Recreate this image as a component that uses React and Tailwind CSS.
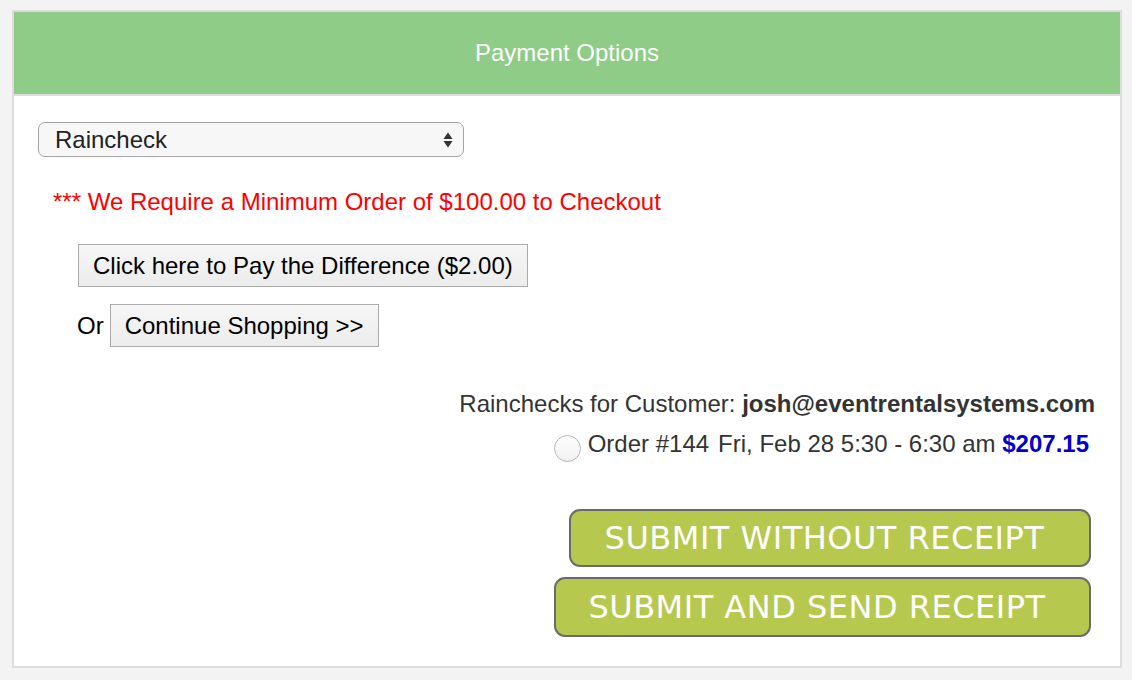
export default function App() {
  return (
    <div className="w-full h-[680px] bg-[#f3f3f3] pt-[10px] pl-[12px] font-['Liberation_Sans',Arial,sans-serif]">
      <div className="w-[1110px] h-[658px] border-2 border-[#dddddd] bg-white flex flex-col">
        <div className="h-[84px] shrink-0 bg-[#8ecc87] border-b-2 border-[#dddddd] flex items-center justify-center text-white text-[24px] leading-[28px]">
          Payment Options
        </div>

        <div className="flex flex-col pt-[26px] pl-[24px] pr-[25px]">
          <div className="w-[426px] h-[35px] rounded-[7px] border-[1.5px] border-[#a3a3a3] bg-[#f7f7f7] flex items-center justify-between pl-[16px] pr-[9px] text-[24px] leading-[28px] text-[#222]">
            <span>Raincheck</span>
            <svg width="12" height="18" viewBox="0 0 12 18">
              <path d="M6 1.5 L10.5 8 L1.5 8 Z" fill="#333" />
              <path d="M6 16.5 L10.5 10 L1.5 10 Z" fill="#333" />
            </svg>
          </div>

          <p className="mt-[31px] ml-[15px] text-[24px] leading-[28px] text-[#ff0000]">
            *** We Require a Minimum Order of $100.00 to Checkout
          </p>

          <div className="mt-[28px] ml-[40px]">
            <button className="h-[43px] px-[14px] border-[1.5px] border-[#aaaaaa] bg-gradient-to-b from-[#f6f6f6] to-[#ececec] text-[24px] leading-[28px] text-black">
              Click here to Pay the Difference ($2.00)
            </button>
          </div>

          <div className="mt-[17px] ml-[39px] flex items-center gap-[6px] text-[24px] leading-[28px] text-black">
            <span>Or</span>
            <button className="h-[43px] px-[14px] border-[1.5px] border-[#aaaaaa] bg-gradient-to-b from-[#f6f6f6] to-[#ececec] text-[24px] leading-[28px] text-black">
              Continue Shopping &gt;&gt;
            </button>
          </div>

          <div className="mt-[43px] flex flex-col items-end text-[24px] leading-[28px] text-[#333]">
            <p>
              Rainchecks for Customer: <b>josh@eventrentalsystems.com</b>
            </p>
            <div className="mt-[8px] mr-[6px] flex items-center">
              <span className="mt-[9px] mr-[7px] w-[27px] h-[27px] rounded-full border border-[#b5b5b5] bg-gradient-to-b from-[#ffffff] to-[#f0f0f0]" />
              <span>
                Order #144<span className="ml-[9px]">Fri, Feb 28 5:30 - 6:30 am</span> <b className="text-[#0000cc]">$207.15</b>
              </span>
            </div>
          </div>

          <div className="mt-[47px] mr-[4px] flex flex-col items-end gap-[10px] font-['DejaVu_Sans',Tahoma,sans-serif] text-white">
            <button className="w-[522px] h-[58px] rounded-[11px] border-2 border-[#6b6b6b] bg-[#b6c94e] text-[32px] leading-[38px] pr-[11px] tracking-[0.5px]">
              SUBMIT WITHOUT RECEIPT
            </button>
            <button className="w-[537px] h-[60px] rounded-[11px] border-2 border-[#6b6b6b] bg-[#b6c94e] text-[32px] leading-[38px] pr-[11px] tracking-[0.5px]">
              SUBMIT AND SEND RECEIPT
            </button>
          </div>
        </div>
      </div>
    </div>
  )
}
